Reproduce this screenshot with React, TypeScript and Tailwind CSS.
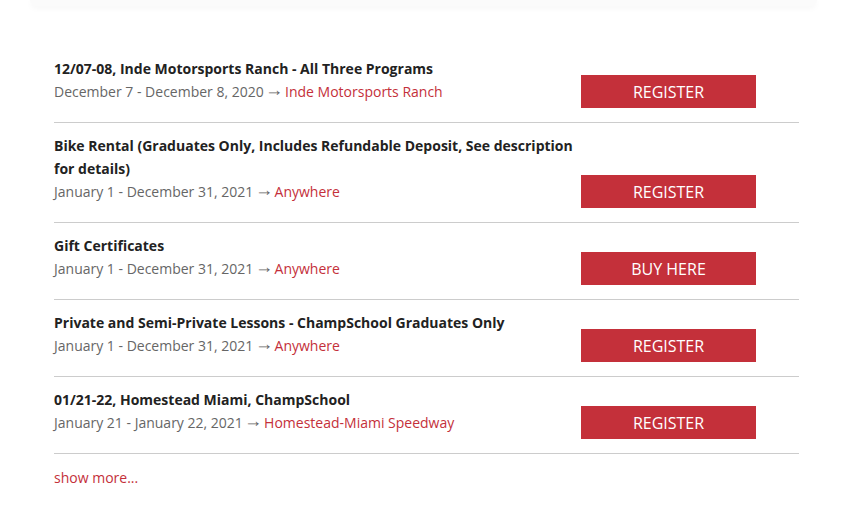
const events = [
  {
    title: '12/07-08, Inde Motorsports Ranch - All Three Programs',
    date: 'December 7 - December 8, 2020',
    place: 'Inde Motorsports Ranch',
    cta: 'REGISTER',
  },
  {
    title: 'Bike Rental (Graduates Only, Includes Refundable Deposit, See description for details)',
    date: 'January 1 - December 31, 2021',
    place: 'Anywhere',
    cta: 'REGISTER',
  },
  {
    title: 'Gift Certificates',
    date: 'January 1 - December 31, 2021',
    place: 'Anywhere',
    cta: 'BUY HERE',
  },
  {
    title: 'Private and Semi-Private Lessons - ChampSchool Graduates Only',
    date: 'January 1 - December 31, 2021',
    place: 'Anywhere',
    cta: 'REGISTER',
  },
  {
    title: '01/21-22, Homestead Miami, ChampSchool',
    date: 'January 21 - January 22, 2021',
    place: 'Homestead-Miami Speedway',
    cta: 'REGISTER',
  },
]

export default function App() {
  return (
    <div className="min-h-[507px] bg-white font-['Open_Sans',sans-serif]">
      {/* header card edge */}
      <div className="mx-[30px] h-[6px] rounded-b-xl bg-[#fbfbfb] shadow-[0_2px_6px_rgba(0,0,0,0.04)]" />

      <div className="mx-[54px] w-[745px] pt-[40px]">
        {events.map(ev => (
          <div key={ev.title} className="flex items-end border-b border-[#cccccc] pt-[11px] pb-[14px]">
            <div className="w-[527px] pb-[4px] text-[14px] leading-[23px]">
              <div className="font-bold text-[#222222]">{ev.title}</div>
              <div className="text-[#666666]">
                {ev.date}{' '}
                <span className="inline-block -translate-y-[2px] scale-[1.3] font-['Liberation_Sans',sans-serif]">→</span>{' '}
                <a className="text-[#c4303a]">{ev.place}</a>
              </div>
            </div>
            <button className="h-[33px] w-[175px] bg-[#c4303a] text-[16px] text-white">
              {ev.cta}
            </button>
          </div>
        ))}
        <div className="pt-[11px]">
          <a className="text-[14px] leading-[23px] text-[#c4303a]">show more...</a>
        </div>
      </div>
    </div>
  )
}
